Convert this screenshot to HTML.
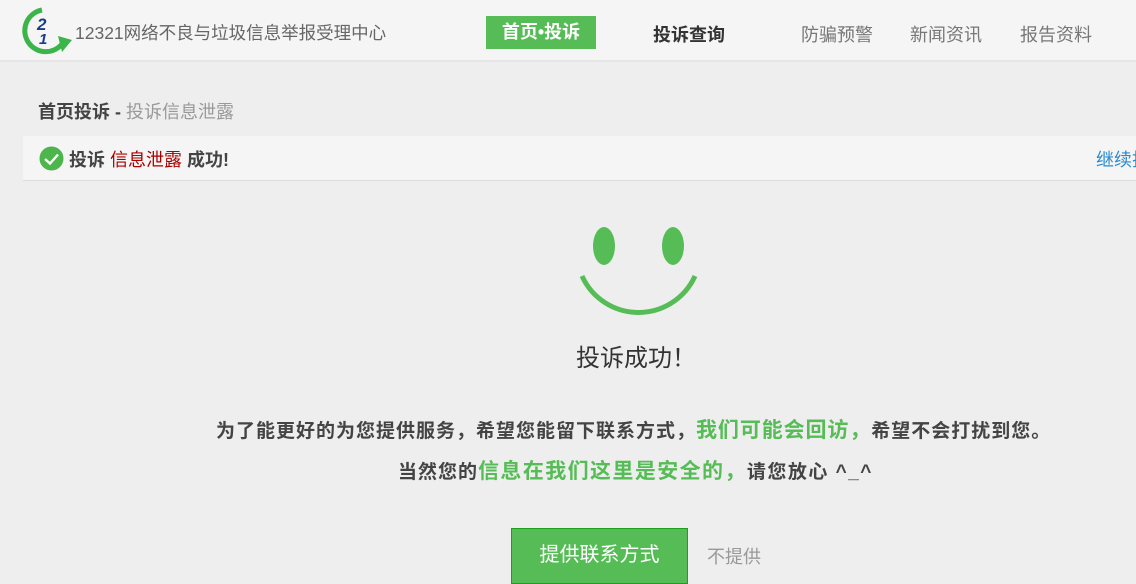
<!DOCTYPE html>
<html><head><meta charset="utf-8"><style>
*{margin:0;padding:0;box-sizing:border-box}
body{width:1136px;height:580px;overflow:hidden;background:#eeeeee;font-family:"Liberation Sans","Noto Sans CJK SC",sans-serif;position:relative}
.hd{position:absolute;left:0;top:0;width:1136px;height:62px;background:#f5f5f5;border-bottom:2px solid #e6e6e6}
.a{position:absolute;white-space:nowrap}
</style></head><body>
<div class="hd"></div>
<svg class="a" style="left:22px;top:6px" width="52" height="50" viewBox="0 0 52 50">
<path d="M20 4 A21 21 0 1 0 40 38" fill="none" stroke="#3bb54a" stroke-width="5"/>
<polygon points="36,30 50,34 40,46" fill="#3bb54a"/>
<text x="15" y="24" font-family="Liberation Sans" font-weight="bold" font-size="17" fill="#1a3a8a" font-style="italic">2</text>
<text x="17" y="38" font-family="Liberation Sans" font-weight="bold" font-size="15" fill="#1a3a8a" font-style="italic">1</text>
</svg>
<div class="a" style="left:75px;top:20px;font-size:17.5px;color:#666">12321网络不良与垃圾信息举报受理中心</div>
<div class="a" style="left:486px;top:16px;width:110px;height:33px;background:#56bd56;color:#fff;font-weight:bold;font-size:18px;line-height:33px;text-align:center">首页•投诉</div>
<div class="a" style="left:653px;top:21px;font-size:18px;font-weight:bold;color:#333">投诉查询</div>
<div class="a" style="left:801px;top:21px;font-size:18px;color:#777">防骗预警</div>
<div class="a" style="left:910px;top:21px;font-size:18px;color:#777">新闻资讯</div>
<div class="a" style="left:1020px;top:21px;font-size:18px;color:#777">报告资料</div>
<div class="a" style="left:38px;top:98px;font-size:18px;color:#999"><b style="color:#444">首页投诉 -</b> 投诉信息泄露</div>
<div class="a" style="left:23px;top:136px;width:1113px;height:45px;background:#f5f5f5;border-bottom:1px solid #ddd"></div>
<svg class="a" style="left:39px;top:146px" width="25" height="25" viewBox="0 0 25 25"><circle cx="12.5" cy="12.5" r="12" fill="#4cb54c"/><path d="M6 13 L11 17.5 L19 8.5" fill="none" stroke="#fff" stroke-width="2.4"/></svg>
<div class="a" style="left:69px;top:146px;font-size:18px;font-weight:bold;color:#444">投诉 <span style="color:#a00;font-weight:normal">信息泄露</span> 成功!</div>
<div class="a" style="left:1096px;top:146px;font-size:18px;color:#2a8ad0">继续投诉</div>
<svg class="a" style="left:570px;top:220px" width="140" height="110" viewBox="570 220 140 110">
<ellipse cx="604" cy="246" rx="11" ry="19" fill="#56bd56"/>
<ellipse cx="673" cy="246" rx="11" ry="19" fill="#56bd56"/>
<path d="M582 276 A62 62 0 0 0 695 276" fill="none" stroke="#56bd56" stroke-width="5"/>
</svg>
<div class="a" style="left:576px;top:338px;font-size:24px;color:#333">投诉成功！</div>
<div class="a" style="left:216px;top:414px;font-size:19px;font-weight:bold;color:#444"><span style="letter-spacing:1px">为了能更好的为您提供服务，希望您能留下联系方式，</span><span style="color:#56bd56;font-size:21px;letter-spacing:0.9px">我们可能会回访，</span><span style="letter-spacing:1px">希望不会打扰到您。</span></div>
<div class="a" style="left:398px;top:455px;font-size:19px;font-weight:bold;color:#444"><span style="letter-spacing:1px">当然您的</span><span style="color:#56bd56;font-size:21px;letter-spacing:1.4px">信息在我们这里是安全的，</span><span style="letter-spacing:1.5px">请您放心 ^_^</span></div>
<div class="a" style="left:511px;top:528px;width:177px;height:56px;background:#56bd56;border:1px solid #1aa01a;color:#fff;font-size:20px;line-height:52px;text-align:center">提供联系方式</div>
<div class="a" style="left:707px;top:543px;font-size:18px;color:#999">不提供</div>
</body></html>
